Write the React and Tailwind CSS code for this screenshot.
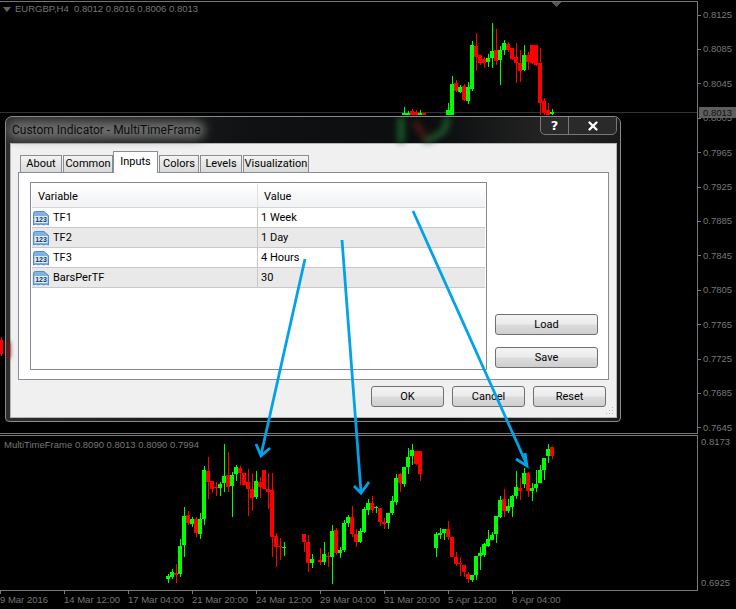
import React from 'react';
import { X } from 'lucide-react';

// [x, high, low, bodyTop, bodyBottom, colour]
const mainCandles = [
  [404, 107, 115, 113, 115, 'g'], [408, 111, 115, 113, 115, 'g'], [412, 109, 115, 111, 115, 'r'], [416, 110, 115, 112, 115, 'r'],
  [420, 110, 115, 113, 115, 'g'], [424, 113, 115, 113, 115, 'r'], [448, 103, 115, 110, 115, 'g'], [452, 76, 115, 84, 115, 'g'],
  [456, 80, 92, 83, 91, 'r'], [460, 85, 93, 87, 92, 'g'], [464, 84, 101, 86, 100, 'r'], [468, 82, 104, 87, 101, 'g'],
  [472, 41, 91, 45, 89, 'g'], [476, 33, 71, 46, 57, 'r'], [480, 55, 65, 55, 63, 'r'], [484, 57, 68, 59, 63, 'r'],
  [488, 54, 67, 58, 62, 'g'], [492, 23, 68, 51, 58, 'g'], [496, 29, 65, 50, 61, 'r'], [500, 46, 85, 50, 60, 'g'],
  [504, 40, 55, 43, 50, 'g'], [508, 42, 52, 44, 50, 'r'], [512, 48, 60, 48, 59, 'r'], [516, 43, 83, 57, 63, 'r'],
  [520, 50, 82, 63, 71, 'r'], [524, 45, 71, 55, 70, 'g'], [528, 52, 70, 55, 62, 'r'], [532, 45, 64, 45, 63, 'r'],
  [536, 45, 66, 45, 65, 'r'], [540, 48, 115, 63, 103, 'r'], [544, 98, 115, 101, 113, 'r'], [548, 103, 115, 110, 115, 'r'],
  [552, 109, 115, 112, 114, 'g'],
  [1, 337, 356, 340, 354, 'r'],
];

const subCandles = [
  [168, 574, 583, 576, 579, 'g'], [172, 569, 579, 572, 577, 'g'], [176, 564, 583, 573, 575, 'r'], [180, 539, 577, 546, 574, 'g'],
  [184, 507, 557, 516, 545, 'g'], [188, 511, 525, 515, 523, 'r'], [192, 517, 527, 519, 524, 'g'], [196, 517, 537, 519, 533, 'r'],
  [200, 513, 539, 519, 534, 'g'], [204, 466, 525, 470, 519, 'g'], [208, 457, 499, 471, 482, 'r'], [212, 481, 493, 481, 489, 'r'],
  [216, 482, 496, 487, 488, 'r'], [220, 482, 496, 484, 488, 'g'], [224, 444, 492, 476, 483, 'g'], [228, 452, 492, 475, 487, 'r'],
  [232, 472, 517, 475, 486, 'g'], [236, 465, 481, 467, 474, 'g'], [240, 466, 485, 468, 473, 'r'], [244, 473, 485, 473, 485, 'r'],
  [248, 469, 516, 482, 489, 'r'], [252, 473, 511, 489, 498, 'r'], [256, 471, 499, 481, 497, 'g'], [260, 477, 498, 482, 487, 'r'],
  [264, 470, 489, 470, 489, 'r'], [268, 473, 509, 489, 492, 'r'], [272, 473, 557, 490, 537, 'r'], [276, 533, 567, 536, 547, 'r'],
  [280, 538, 560, 546, 547, 'r'], [284, 542, 556, 547, 548, 'g'],
  [304, 534, 552, 534, 542, 'r'], [308, 535, 572, 542, 563, 'r'], [312, 554, 568, 559, 563, 'g'], [320, 548, 565, 560, 562, 'r'],
  [324, 542, 565, 554, 562, 'g'], [328, 552, 567, 556, 557, 'r'], [332, 525, 584, 531, 557, 'g'], [336, 528, 555, 530, 553, 'r'],
  [340, 547, 558, 550, 553, 'g'], [344, 520, 552, 523, 550, 'g'], [348, 515, 527, 517, 523, 'g'], [352, 506, 537, 517, 534, 'r'],
  [356, 529, 547, 534, 542, 'r'], [360, 528, 543, 531, 542, 'g'], [364, 507, 533, 509, 532, 'g'], [368, 499, 515, 503, 510, 'g'],
  [372, 496, 513, 503, 510, 'r'], [376, 506, 513, 507, 508, 'g'], [380, 508, 526, 508, 522, 'r'], [384, 518, 529, 522, 524, 'r'],
  [388, 513, 529, 513, 523, 'g'], [392, 496, 515, 501, 513, 'g'], [396, 474, 505, 478, 502, 'g'], [400, 473, 492, 474, 483, 'r'],
  [404, 467, 487, 467, 484, 'g'], [408, 448, 474, 457, 467, 'g'], [412, 444, 465, 450, 456, 'g'], [416, 451, 465, 451, 464, 'r'],
  [420, 451, 481, 451, 474, 'r'],
  [436, 532, 557, 534, 548, 'g'], [440, 528, 539, 533, 535, 'g'], [444, 529, 540, 529, 533, 'g'], [448, 521, 540, 529, 537, 'r'],
  [452, 537, 557, 537, 557, 'r'], [456, 552, 566, 557, 564, 'r'], [460, 557, 576, 563, 564, 'r'], [464, 565, 577, 565, 572, 'r'],
  [468, 572, 583, 574, 579, 'r'], [472, 575, 582, 575, 580, 'g'], [476, 556, 580, 556, 575, 'g'], [480, 547, 570, 553, 556, 'g'],
  [484, 543, 557, 544, 555, 'g'], [488, 530, 547, 539, 546, 'g'], [492, 532, 540, 535, 540, 'g'], [496, 516, 543, 516, 534, 'g'],
  [500, 496, 518, 500, 517, 'g'], [504, 489, 517, 499, 511, 'r'], [508, 499, 513, 506, 511, 'g'], [512, 495, 517, 496, 507, 'g'],
  [516, 471, 499, 487, 496, 'g'], [520, 478, 500, 488, 491, 'r'], [524, 468, 488, 473, 484, 'g'], [528, 472, 497, 473, 491, 'r'],
  [532, 483, 501, 488, 491, 'g'], [536, 470, 492, 484, 488, 'g'], [540, 465, 483, 470, 483, 'g'], [544, 458, 480, 458, 470, 'g'],
  [548, 444, 463, 449, 456, 'g'], [552, 447, 459, 447, 456, 'r'],
];

const mainPrices = ['0.8125', '0.8085', '0.8045', '0.8005', '0.7965', '0.7925', '0.7885', '0.7845', '0.7805', '0.7765', '0.7725', '0.7685', '0.7645'];
const times = ['9 Mar 2016', '14 Mar 12:00', '17 Mar 04:00', '21 Mar 20:00', '24 Mar 12:00', '29 Mar 04:00', '31 Mar 20:00', '5 Apr 12:00', '8 Apr 04:00'];
const tabs = [
  { name: 'About', w: 'w-[42px]' },
  { name: 'Common', w: 'ml-px w-[50px]' },
  { name: 'Inputs', w: 'w-[45px]', active: true },
  { name: 'Colors', w: 'ml-px w-[40px]' },
  { name: 'Levels', w: 'ml-px w-[42px]' },
  { name: 'Visualization', w: 'ml-px w-[66px]' },
];
const rows = [
  { name: 'TF1', value: '1 Week' },
  { name: 'TF2', value: '1 Day' },
  { name: 'TF3', value: '4 Hours' },
  { name: 'BarsPerTF', value: '30' },
];

function Candles({ data }) {
  return data.map(([x, hi, lo, top, bot, c]) => (
    <g key={x} fill={c === 'g' ? '#00ff00' : '#ff0000'}>
      <rect x={x} y={hi} width="1" height={lo - hi} />
      <rect x={x - 2} y={top} width="4" height={Math.max(bot - top, 1)} />
    </g>
  ));
}

function InputIcon() {
  return (
    <svg width="16" height="16" viewBox="0 0 16 16" className="shrink-0">
      <path d="M0.5 3.5 Q0.5 1.5 2.5 1.5 H11 L15.5 5.5 V15 L13 14 L11 15 L8 14 L5 15 L3 14 L0.5 15 Z" fill="#7fb2e5" stroke="#4f8cc9" />
      <rect x="1.5" y="6" width="13" height="7" fill="#e3effb" />
      <text x="8" y="12" textAnchor="middle" fontSize="7" fontWeight="700" fill="#0d3766" fontFamily="'Liberation Sans', sans-serif">123</text>
    </svg>
  );
}

function DlgButton({ label, className }) {
  return (
    <button className={`h-[21px] rounded-[3px] border border-[#707070] bg-[linear-gradient(#f3f3f3_0%,#ebebeb_48%,#dcdcdc_52%,#cfcfcf_100%)] pt-px text-[11px] text-black ${className}`}>
      {label}
    </button>
  );
}

function Dialog() {
  return (
    <div className="absolute left-[5px] top-[116px] flex h-[306px] w-[616px] flex-col overflow-hidden rounded-t-[7px] rounded-b-[4px] border border-[#8a8a8a] bg-[linear-gradient(90deg,#2e2e2e_0%,#0f1112_40%,#0b0d0e_70%,#242424_88%,#1a1a1a_100%)] font-['Roboto',sans-serif]">
      <div className="absolute left-0 top-[225px] h-[16px] w-[4px] bg-[#7a1010] blur-[2px]" />
      <div className="relative flex h-[26px] shrink-0 items-start justify-between">
        <svg width="70" height="26" viewBox="0 0 70 26" className="absolute left-[390px] top-0 opacity-70 blur-[3px]">
          <path d="M5 0 V26" stroke="#1f7a35" strokeWidth="7" />
          <path d="M18 4 L30 22" stroke="#6e2018" strokeWidth="5" />
          <path d="M28 26 L48 14 L52 0" stroke="#2a7a3a" strokeWidth="6" fill="none" />
        </svg>
        <div className="relative ml-[6px] mt-[4px]">
          <div className="absolute -inset-x-1 inset-y-0 rounded-full bg-[#6b6b6b] blur-[5px]" />
          <span className="relative text-[12px] leading-[18px] text-[#0c0c0c]">Custom Indicator - MultiTimeFrame</span>
        </div>
        <div className="relative mr-[3px] flex h-[19px] -translate-y-px rounded-b-[5px] border border-[#777] bg-[#2a2a2a]">
          <div className="flex w-[28px] items-center justify-center border-r border-[#777] font-['DejaVu_Sans',sans-serif] text-[13px] font-bold leading-[15px] text-white">?</div>
          <div className="flex w-[47px] items-center justify-center text-white"><X size={14} strokeWidth={4} /></div>
        </div>
      </div>

      <div className="ml-[4px] flex h-[275px] w-[607px] shrink-0 flex-col border border-[#b5b5b5] bg-[#f0f0f0] pl-[7px] pr-[7px] pt-[8px]">
        <div className="flex h-[20px] items-end pl-[2px]">
          {tabs.map(t => (
            <div
              key={t.name}
              className={`relative flex items-center justify-center border border-b-0 border-[#898c95] text-[11px] text-black ${t.w} ${t.active ? 'z-10 -mb-px h-[22px] bg-white' : 'h-[17px] bg-[linear-gradient(#f4f4f4,#d9d9d9)] pt-px'}`}
            >
              {t.name}
            </div>
          ))}
        </div>
        <div className="flex h-[208px] w-[591px] border border-[#898c95] bg-white pl-[11px] pt-[9px]">
          <div className="h-[188px] w-[457px] border border-[#828790] bg-white p-px text-[11px] text-black">
            <div className="flex h-[24px] border-b border-[#d5d5d5] bg-[linear-gradient(#ffffff,#f1f2f4)]">
              <div className="flex w-[226px] items-center border-r border-[#e0e0e0] pl-[6px] pt-[3px]">Variable</div>
              <div className="flex items-center pl-[6px] pt-[3px]">Value</div>
            </div>
            {rows.map((r, i) => (
              <div key={r.name} className={`flex h-[20px] border-b border-[#c8c8c8] ${i % 2 ? 'bg-[#e9e9e9]' : 'bg-white'}`}>
                <div className="flex w-[226px] items-center gap-[4px] border-r border-[#c8c8c8] pl-[1px]">
                  <InputIcon />
                  <span className="pt-px">{r.name}</span>
                </div>
                <div className="flex items-center pl-[3px] pt-px">{r.value}</div>
              </div>
            ))}
          </div>
          <div className="ml-[8px] flex h-[186px] flex-col justify-end gap-[12px]">
            <DlgButton label="Load" className="w-[103px]" />
            <DlgButton label="Save" className="w-[103px]" />
          </div>
        </div>
        <div className="relative mr-[3px] mt-[6px] flex justify-end gap-[8px]">
          <DlgButton label="OK" className="w-[73px]" />
          <DlgButton label="Cancel" className="w-[73px]" />
          <DlgButton label="Reset" className="w-[73px]" />
          <svg width="8" height="8" viewBox="0 0 8 8" fill="#b8b8b8" className="absolute -right-[8px] top-[21px]">
            <rect x="6" y="0" width="1" height="1" />
            <rect x="3" y="3" width="1" height="1" />
            <rect x="6" y="3" width="1" height="1" />
            <rect x="0" y="6" width="1" height="1" />
            <rect x="3" y="6" width="1" height="1" />
            <rect x="6" y="6" width="1" height="1" />
          </svg>
        </div>
      </div>
    </div>
  );
}

export default function App() {
  return (
    <div className="relative flex h-[609px] w-[736px] flex-col overflow-hidden bg-black pt-px font-['Liberation_Sans',sans-serif] text-[9.5px] text-[#777]">
      <div className="flex h-[433px] shrink-0">
        <div className="relative h-full w-[698px] shrink-0 border-r border-b border-t border-[#777]">
          <svg width="697" height="431" viewBox="0 2 697 431" shapeRendering="crispEdges" className="block">
            <rect x="0" y="112" width="697" height="1" fill="#333" />
            <Candles data={mainCandles} />
            <path d="M552 2 H561 L556.5 7 Z" fill="#555" />
          </svg>
          <div className="absolute left-[3px] top-px flex items-center gap-[4px] whitespace-pre leading-[12px]">
            <span className="h-0 w-0 border-x-[4px] border-t-[5px] border-x-transparent border-t-[#666]" />
            <span>EURGBP,H4  0.8012 0.8016 0.8006 0.8013</span>
          </div>
        </div>
        <div className="flex flex-1 flex-col justify-between pt-[8px]">
          {mainPrices.map(p => (
            <div key={p} className="flex h-[12px] items-center gap-[2px] leading-[12px]">
              <span className="h-px w-[3px] bg-[#777]" />
              {p}
            </div>
          ))}
        </div>
      </div>

      <div className="mt-px flex h-[156px] shrink-0">
        <div className="relative h-full w-[698px] shrink-0 border-y border-r border-[#777]">
          <svg width="697" height="154" viewBox="0 436 697 154" shapeRendering="crispEdges" className="block">
            <Candles data={subCandles} />
          </svg>
          <div className="absolute left-[4px] top-[2px] leading-[14px]">MultiTimeFrame 0.8090 0.8013 0.8090 0.7994</div>
        </div>
        <div className="flex flex-1 flex-col justify-between pb-[2px] pl-[3px] pt-px leading-[12px]">
          <div>0.8173</div>
          <div>0.6925</div>
        </div>
      </div>

      <div className="flex">
        {times.map(t => (
          <div key={t} className="w-[64px] shrink-0 whitespace-nowrap leading-[12px]">
            <div className="h-[3px] w-px bg-[#777]" />
            {t}
          </div>
        ))}
      </div>

      <div className="absolute left-[699px] top-[107px] h-[11px] w-[37px] bg-[#5e5e5e] pl-[4px] leading-[11px] text-[#111]">0.8013</div>

      <Dialog />

      <svg width="736" height="609" viewBox="0 0 736 609" className="pointer-events-none absolute left-0 top-0" fill="none" stroke="#00a2e8" strokeWidth="2.8">
        <path d="M305 259 L261 455 M256 444 L261 456 L270 448" />
        <path d="M342 240 L361 492 M354 486 L361 493 L369 482" />
        <path d="M413 211 L527 465 M516 459 L527 466 L525 453" />
      </svg>
    </div>
  );
}
